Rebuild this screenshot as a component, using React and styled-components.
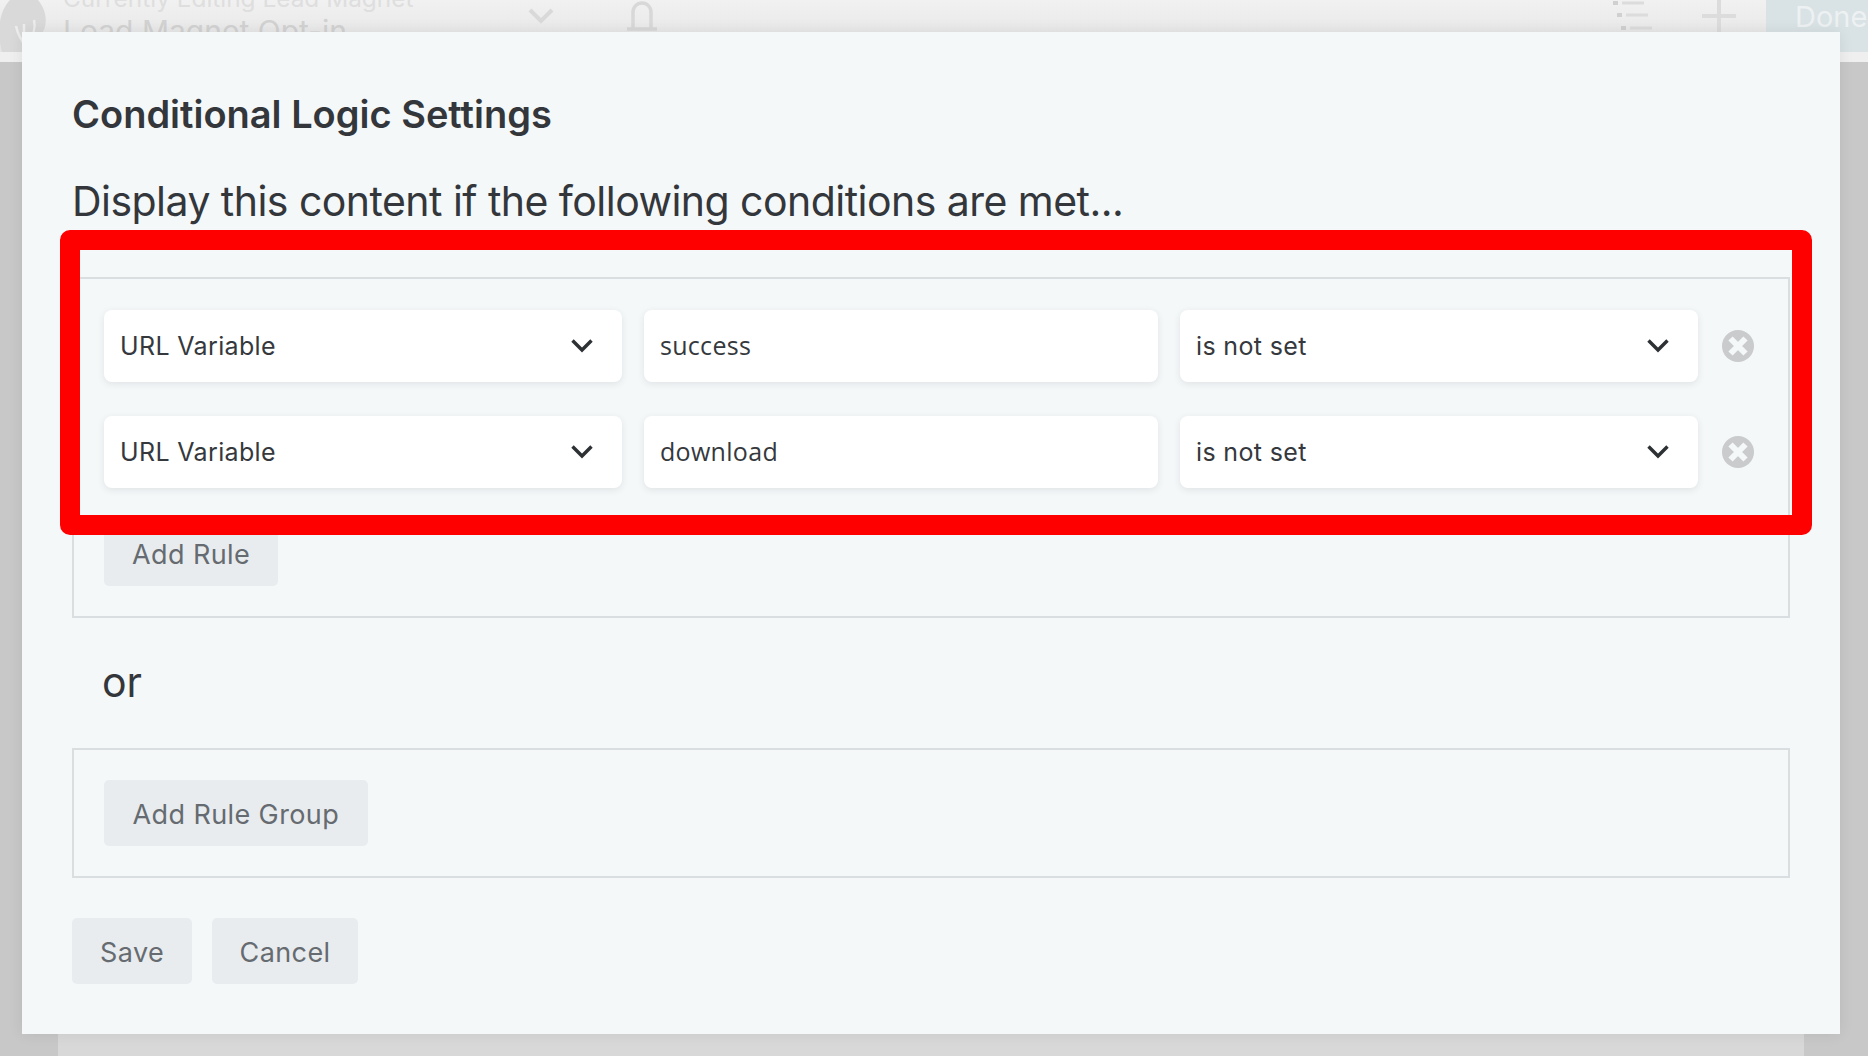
import * as React from 'react';
import styled, { createGlobalStyle } from 'styled-components';

const GlobalStyle = createGlobalStyle`
  html, body {
    margin: 0;
    padding: 0;
    background: #c9c9c9;
  }
  * {
    box-sizing: border-box;
  }
`;

const Page = styled.div`
  position: relative;
  width: 1868px;
  height: 1056px;
  overflow: hidden;
  display: flex;
  flex-direction: column;
  font-family: Inter, "Liberation Sans", sans-serif;
`;

const TopBar = styled.header`
  height: 52px;
  flex: none;
  display: flex;
  align-items: flex-start;
  background: linear-gradient(#f1f1f1, #e4e4e4);
`;

const Logo = styled.svg`
  width: 48px;
  height: 52px;
  flex: none;
`;

const TitleStack = styled.div`
  margin: -17px 0 0 15px;
  width: 450px;
  flex: none;
`;

const Eyebrow = styled.div`
  height: 30px;
  font-size: 24.4px;
  line-height: 30px;
  color: #dedede;
  white-space: nowrap;
`;

const PageName = styled.div`
  font-size: 30px;
  line-height: 36px;
  color: #d2d2d2;
  white-space: nowrap;
`;

const HeaderIcon = styled.svg`
  flex: none;
  margin-left: ${(p) => p.$gap}px;
  margin-top: ${(p) => p.$top}px;
`;

const DoneButton = styled.div`
  margin-left: auto;
  width: 102px;
  height: 52px;
  padding: 0 0 20px 29px;
  display: flex;
  align-items: center;
  background: #d9e2e5;
  color: #edf1f2;
  font-size: 29px;
  white-space: nowrap;
`;

const Band = styled.div`
  height: 10px;
  flex: none;
  background: #efefef;
`;

const Workspace = styled.main`
  flex: 1;
  padding: 0 64px 0 58px;
  background: #c8c8c8;
`;

const Canvas = styled.div`
  height: 100%;
  background: #d8d8d8;
`;

const Modal = styled.section`
  position: absolute;
  left: 22px;
  top: 32px;
  width: 1818px;
  height: 1002px;
  padding: 58px 50px 0;
  background: #f5f8f9;
  box-shadow: 0 0 14px rgba(0, 0, 0, 0.08);
  color: #33373b;
`;

const Title = styled.h2`
  margin: 0;
  height: 48px;
  font-size: 38px;
  line-height: 48px;
  font-weight: 600;
  letter-spacing: 0;
`;

const Lead = styled.p`
  margin: 37px 0 0;
  height: 52px;
  font-size: 41px;
  line-height: 52px;
  font-weight: 400;
  letter-spacing: -0.54px;
`;

const GroupBox = styled.div`
  width: 1718px;
  padding: ${(p) => p.$padTop || 30}px 30px 30px;
  border: 2px solid #d9dfe1;
  margin-top: ${(p) => p.$top}px;
`;

const RuleRow = styled.div`
  display: flex;
  align-items: center;
  gap: 22px;
  margin-bottom: 34px;

  &:nth-of-type(2) {
    margin-bottom: 31px;
  }
`;

const Field = styled.div`
  width: ${(p) => p.$width}px;
  height: 72px;
  flex: none;
  padding: 0 28px 0 16px;
  display: flex;
  align-items: center;
  justify-content: space-between;
  background: #fff;
  border-radius: 8px;
  box-shadow: 0 2px 7px rgba(40, 50, 60, 0.1);
  font-size: 25px;
  letter-spacing: 0.35px;
  color: #35393d;
`;

const TextValue = styled(Field)`
  padding-bottom: 2px;
  font-family: "Open Sans", Inter, sans-serif;
  letter-spacing: 0.3px;
`;

const CloseIcon = styled.svg`
  width: 32px;
  height: 32px;
  flex: none;
  margin-left: 2px;
`;

const Button = styled.button`
  height: ${(p) => p.$height || 66}px;
  padding: ${(p) => p.$dropText || 2}px ${(p) => p.$side || 28}px 0;
  border: 0;
  border-radius: 5px;
  background: #e9ecee;
  color: #656b70;
  font-family: inherit;
  font-size: 27px;
  letter-spacing: 0.4px;
`;

const OrLabel = styled.div`
  height: 48px;
  margin: 40px 0 0 30px;
  font-size: 41px;
  line-height: 48px;
`;

const Actions = styled.div`
  display: flex;
  gap: 20px;
  margin-top: 40px;
`;

const Highlight = styled.div`
  position: absolute;
  left: 38px;
  top: 198px;
  width: 1752px;
  height: 305px;
  border: 20px solid #ff0000;
  border-radius: 10px;
  pointer-events: none;
`;

const Chevron = () => (
  <svg width="24" height="16" viewBox="0 0 24 16" fill="none">
    <path d="M2.5 2.5 12 12l9.5-9.5" stroke="#2e3134" strokeWidth="3.4" />
  </svg>
);

const Remove = () => (
  <CloseIcon viewBox="0 0 32 32">
    <circle cx="16" cy="16" r="16" fill="#c9cbcc" />
    <path d="M8.5 8.5l15 15M23.5 8.5l-15 15" stroke="#f5f8f9" strokeWidth="6" />
  </CloseIcon>
);

const rules = ['success', 'download'];

const App = () => (
  <>
    <GlobalStyle />
    <Page>
      <TopBar>
        <Logo viewBox="0 0 48 52">
          <path d="M2 52C-4 30 0 10 10 0h28c10 12 10 28 2 36L24 52z" fill="#d9d9d9" />
          <path d="M16 26c2 10 6 16 12 22M34 20c2 8 0 14-6 22M24 24v18" stroke="#ededed" strokeWidth="2.5" fill="none" />
        </Logo>
        <TitleStack>
          <Eyebrow>Currently Editing Lead Magnet</Eyebrow>
          <PageName>Load Magnet Opt-in</PageName>
        </TitleStack>
        <HeaderIcon $gap={15} $top={8} width="26" height="16" viewBox="0 0 26 16" fill="none">
          <path d="M2 2l11 11L24 2" stroke="#d9d9d9" strokeWidth="4" />
        </HeaderIcon>
        <HeaderIcon $gap={71} $top={0} width="34" height="32" viewBox="0 0 34 32" fill="none">
          <path d="M8 29V12c0-5 4-9 9-9s9 4 9 9v17M2 29h30" stroke="#d8d8d8" strokeWidth="3.5" />
        </HeaderIcon>
        <HeaderIcon $gap={953} $top={0} width="42" height="32" viewBox="0 0 42 32" fill="none">
          <path d="M10 3h22M14 15h22M18 28h22" stroke="#dcdcdc" strokeWidth="3" />
          <path d="M1 3h5M5 15h5M9 28h5" stroke="#d0d0d0" strokeWidth="4" />
        </HeaderIcon>
        <HeaderIcon $gap={48} $top={0} width="34" height="32" viewBox="0 0 34 32" fill="none">
          <path d="M17 0v32M0 16h34" stroke="#dcdcdc" strokeWidth="4" />
        </HeaderIcon>
        <DoneButton>Done</DoneButton>
      </TopBar>
      <Band />
      <Workspace>
        <Canvas />
      </Workspace>

      <Modal>
        <Title>Conditional Logic Settings</Title>
        <Lead>Display this content if the following conditions are met...</Lead>
        <GroupBox $top={50} $padTop={31}>
          {rules.map((name) => (
            <RuleRow key={name}>
              <Field $width={518}>
                URL Variable
                <Chevron />
              </Field>
              <TextValue $width={514}>{name}</TextValue>
              <Field $width={518}>
                is not set
                <Chevron />
              </Field>
              <Remove />
            </RuleRow>
          ))}
          <Button $dropText={4} $height={67}>Add Rule</Button>
        </GroupBox>
        <OrLabel>or</OrLabel>
        <GroupBox $top={42}>
          <Button $side={28.5}>Add Rule Group</Button>
        </GroupBox>
        <Actions>
          <Button>Save</Button>
          <Button $side={27.5}>Cancel</Button>
        </Actions>
        <Highlight />
      </Modal>
    </Page>
  </>
);

export default App;
